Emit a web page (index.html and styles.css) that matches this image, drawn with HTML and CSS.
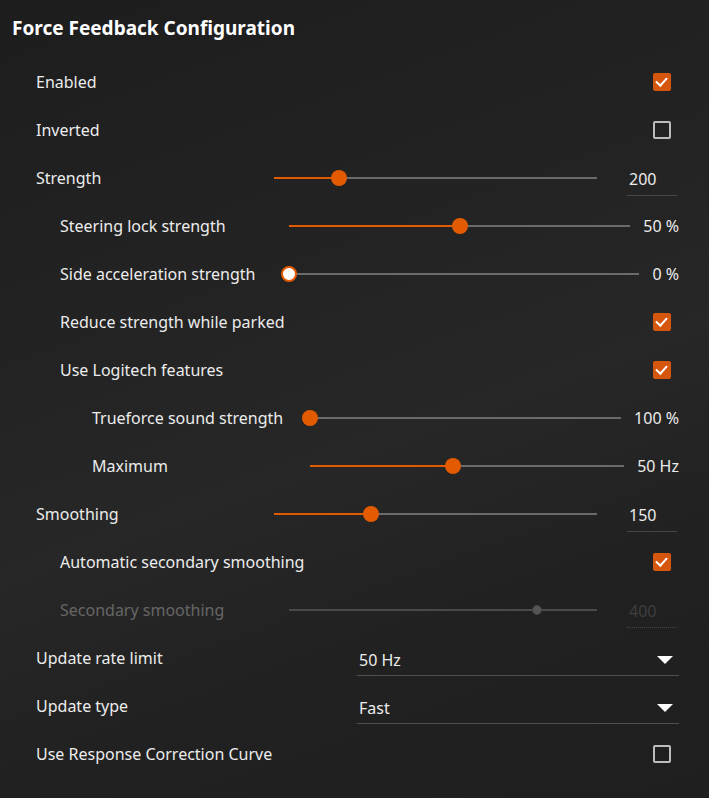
FILE: index.html
```html
<!DOCTYPE html>
<html lang="en">
<head>
    <meta charset="UTF-8">
    <title>Force Feedback Configuration</title>
    <link rel="stylesheet" href="styles.css">
</head>
<body>
    <div class="panel">
        <h1 class="title">Force Feedback Configuration</h1>

        <div class="row">
            <span class="label">Enabled</span>
            <span class="check on"></span>
        </div>
        <div class="row">
            <span class="label">Inverted</span>
            <span class="check"></span>
        </div>
        <div class="row">
            <span class="label lvl0">Strength</span>
            <div class="slider"><div class="fill" style="width: 20%"></div><span class="thumb" style="left: 20%"></span></div>
            <span class="field">200</span>
        </div>
        <div class="row">
            <span class="label lvl1">Steering lock strength</span>
            <div class="slider"><div class="fill" style="width: 50%"></div><span class="thumb" style="left: 50%"></span></div>
            <span class="value">50 %</span>
        </div>
        <div class="row">
            <span class="label lvl1">Side acceleration strength</span>
            <div class="slider"><div class="fill" style="width: 0%"></div><span class="thumb zero" style="left: 0%"></span></div>
            <span class="value">0 %</span>
        </div>
        <div class="row">
            <span class="label sub">Reduce strength while parked</span>
            <span class="check on"></span>
        </div>
        <div class="row">
            <span class="label sub">Use Logitech features</span>
            <span class="check on"></span>
        </div>
        <div class="row">
            <span class="label lvl2">Trueforce sound strength</span>
            <div class="slider"><div class="fill" style="width: 0%"></div><span class="thumb" style="left: 0%"></span></div>
            <span class="value">100 %</span>
        </div>
        <div class="row">
            <span class="label lvl2">Maximum</span>
            <div class="slider"><div class="fill" style="width: 45.5%"></div><span class="thumb" style="left: 45.5%"></span></div>
            <span class="value">50 Hz</span>
        </div>
        <div class="row">
            <span class="label lvl0">Smoothing</span>
            <div class="slider"><div class="fill" style="width: 30%"></div><span class="thumb" style="left: 30%"></span></div>
            <span class="field">150</span>
        </div>
        <div class="row">
            <span class="label sub">Automatic secondary smoothing</span>
            <span class="check on"></span>
        </div>
        <div class="row disabled">
            <span class="label lvl1">Secondary smoothing</span>
            <div class="slider"><span class="thumb small" style="left: 80.5%"></span></div>
            <span class="field">400</span>
        </div>
        <div class="row">
            <span class="label drop-label">Update rate limit</span>
            <div class="select">50 Hz<span class="arrow"></span></div>
        </div>
        <div class="row">
            <span class="label drop-label">Update type</span>
            <div class="select">Fast<span class="arrow"></span></div>
        </div>
        <div class="row">
            <span class="label">Use Response Correction Curve</span>
            <span class="check"></span>
        </div>
    </div>
</body>
</html>
```

FILE: styles.css
```css
body {
    margin: 0;
    background: linear-gradient(160deg, #1d1d1d 0%, #232323 35%, #272727 55%, #212121 75%, #1f1f1f 100%);
    color: #ececec;
    font-family: "Noto Sans", "Open Sans", sans-serif;
    font-size: 16px;
    min-height: 798px;
}

.panel {
    padding: 0 30px 20px 36px;
}

.title {
    margin: 0 0 0 -24px;
    height: 58px;
    line-height: 56px;
    font-size: 19px;
    font-weight: 700;
    color: #fff;
}

.row {
    display: flex;
    align-items: center;
    height: 48px;
}

.label {
    flex: 1;
    white-space: nowrap;
}

.sub { padding-left: 24px; }
.lvl0 { flex: 0 0 238px; }
.lvl1 { flex: 0 0 229px; padding-left: 24px; }
.lvl2 { flex: 0 0 218px; padding-left: 56px; }
.drop-label { flex: 0 0 321px; }

/* checkbox */
.check {
    width: 18px;
    height: 18px;
    box-sizing: border-box;
    border: 2px solid #bdbdbd;
    border-radius: 2px;
    margin-right: 8px;
    position: relative;
}

.check.on {
    background: #d4570d;
    border-color: #d4570d;
}

.check.on::after {
    content: "";
    position: absolute;
    left: 3px;
    top: 0px;
    width: 5px;
    height: 9px;
    border: solid #fff;
    border-width: 0 2px 2px 0;
    transform: rotate(42deg);
}

/* slider */
.slider {
    flex: 1;
    height: 2px;
    background: #6b6b6b;
    position: relative;
}

.slider .fill {
    height: 100%;
    background: #e35b00;
}

.thumb {
    position: absolute;
    top: 1px;
    width: 16px;
    height: 16px;
    margin: -8px 0 0 -8px;
    border-radius: 50%;
    background: #e35b00;
}

.thumb.zero {
    box-sizing: border-box;
    background: #fff;
    border: 2px solid #e35b00;
}

.value {
    margin-left: 13px;
    text-align: right;
    white-space: nowrap;
}

.field {
    flex: 0 0 48px;
    margin-left: 30px;
    margin-right: 2px;
    padding-left: 2px;
    height: 32px;
    line-height: 32px;
    margin-top: 2px;
    border-bottom: 1px solid #474747;
}

/* disabled row */
.disabled .label { color: #666; }
.disabled .slider { background: #4a4a4a; }
.disabled .field {
    color: #3e3e3e;
    border-bottom: 1px dotted #444;
}
.thumb.small {
    width: 10px;
    height: 10px;
    margin: -5px 0 0 -5px;
    box-sizing: border-box;
    background: #555;
    border: 1px solid #444;
}

/* dropdown */
.select {
    flex: 1;
    display: flex;
    align-items: center;
    justify-content: space-between;
    height: 30px;
    margin-top: 4px;
    padding-left: 2px;
    border-bottom: 1px solid #505050;
}

.arrow {
    width: 0;
    height: 0;
    margin-right: 6px;
    border-left: 8px solid transparent;
    border-right: 8px solid transparent;
    border-top: 8px solid #fff;
}
```
